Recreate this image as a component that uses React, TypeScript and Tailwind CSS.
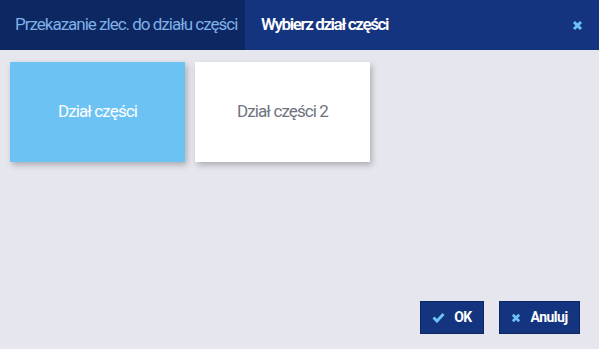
import React from 'react';

const sections = [
  { id: 1, name: 'Dział części', active: true },
  { id: 2, name: 'Dział części 2', active: false },
];

function CheckIcon() {
  return (
    <svg width="13" height="11" viewBox="0 0 13 11">
      <path d="M1.5 5.5 L5 9 L11.5 2" fill="none" stroke="#6cc3f3" strokeWidth="3" />
    </svg>
  );
}

function CrossIcon({ size = 11 }: { size?: number }) {
  return (
    <svg width={size} height={size} viewBox="0 0 11 11">
      <path d="M2 2 L9 9 M9 2 L2 9" fill="none" stroke="#6cc3f3" strokeWidth="3" />
    </svg>
  );
}

export default function App() {
  return (
    <div
      className="w-[599px] h-[349px] flex flex-col bg-[#e6e7ee]"
      style={{ fontFamily: 'Roboto, "Noto Sans", sans-serif' }}
    >
      <div className="h-[50px] flex bg-[#14347f]">
        <div className="w-[245px] flex items-center pl-[15px] bg-[#0d2762] text-[#7fb0e6] text-[17px] tracking-[-1px]">
          Przekazanie zlec. do działu części
        </div>
        <div className="flex-1 flex items-center justify-between pl-[16px] pr-[16px] text-white text-[17px] font-semibold tracking-[-1.4px]">
          <span>Wybierz dział części</span>
          <CrossIcon />
        </div>
      </div>

      <div className="flex-1 flex flex-col">
        <div className="flex gap-[10px] pl-[10px] pt-[12px]">
          {sections.map((s) => (
            <div
              key={s.id}
              className={
                s.active
                  ? 'w-[175px] h-[100px] flex items-center justify-center bg-[#6cc3f3] text-white text-[17px] tracking-[-0.9px] shadow-[2px_3px_6px_rgba(0,0,0,0.25)]'
                  : 'w-[175px] h-[100px] flex items-center justify-center bg-white text-[#6f7380] text-[17px] tracking-[-0.9px] shadow-[2px_3px_6px_rgba(0,0,0,0.25)]'
              }
            >
              {s.name}
            </div>
          ))}
        </div>

        <div className="mt-auto flex justify-end gap-[15px] pr-[19px] pb-[15px]">
          <button className="w-[64px] h-[33px] flex items-center justify-center gap-[9px] bg-[#14347f] border border-[#0d2762] text-white text-[14px] font-bold tracking-[-0.5px]">
            <CheckIcon />
            OK
          </button>
          <button className="w-[81px] h-[33px] flex items-center justify-center gap-[9px] bg-[#14347f] border border-[#0d2762] text-white text-[14px] font-bold tracking-[-0.5px]">
            <CrossIcon size={10} />
            Anuluj
          </button>
        </div>
      </div>
    </div>
  );
}
